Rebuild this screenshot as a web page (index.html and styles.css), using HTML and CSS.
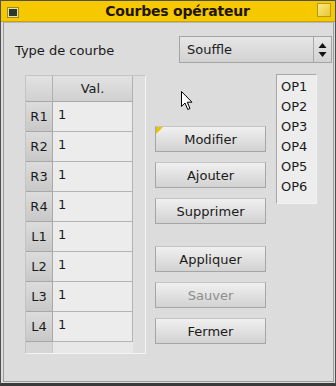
FILE: index.html
```html
<!DOCTYPE html>
<html>
<head>
<meta charset="utf-8">
<link rel="stylesheet" href="styles.css">
</head>
<body>
<div class="window">
  <div class="titlebar">
    <span class="win-icon"></span>
    <span class="title">Courbes opérateur</span>
    <span class="close-box"></span>
  </div>
  <div class="frame">
    <div class="type-row">
      <span class="label">Type de courbe</span>
      <div class="combo">
        <span class="combo-text">Souffle</span>
        <span class="combo-arrows">
          <svg width="9" height="16" viewBox="0 0 9 16"><path d="M4.5 1 L8.5 6 L0.5 6 Z" fill="#111"/><path d="M0.5 10 L8.5 10 L4.5 15 Z" fill="#111"/></svg>
        </span>
      </div>
    </div>
    <div class="main">
      <div class="table">
        <div class="grid">
          <div class="corner"></div><div class="colhead">Val.</div>
          <div class="rowhead">R1</div><div class="cell">1</div>
          <div class="rowhead">R2</div><div class="cell">1</div>
          <div class="rowhead">R3</div><div class="cell">1</div>
          <div class="rowhead">R4</div><div class="cell">1</div>
          <div class="rowhead">L1</div><div class="cell">1</div>
          <div class="rowhead">L2</div><div class="cell">1</div>
          <div class="rowhead">L3</div><div class="cell">1</div>
          <div class="rowhead">L4</div><div class="cell">1</div>
        </div>
        <div class="table-rest">
          <div class="rest-head"></div><div class="rest-body"></div>
        </div>
      </div>
      <div class="buttons">
        <button class="btn default">Modifier</button>
        <button class="btn">Ajouter</button>
        <button class="btn">Supprimer</button>
        <button class="btn sep">Appliquer</button>
        <button class="btn disabled">Sauver</button>
        <button class="btn">Fermer</button>
      </div>
      <ul class="oplist">
        <li>OP1</li><li>OP2</li><li>OP3</li><li>OP4</li><li>OP5</li><li>OP6</li>
      </ul>
    </div>
  </div>
  <svg class="cursor" width="13" height="20" viewBox="0 0 13 20"><path d="M0.5 0.5 L0.5 15.5 L4 12 L6.8 18.5 L9 17.5 L6.3 11.2 L11 11.2 Z" fill="#fff" stroke="#000" stroke-width="1" stroke-linejoin="miter"/></svg>
</div>
</body>
</html>
```
FILE: styles.css
```css
html, body {
  margin: 0;
  padding: 0;
  background: #dcdcdc;
}
body {
  font-family: "DejaVu Sans", "Liberation Sans", sans-serif;
  font-size: 13px;
  color: #1a1a1a;
}
.window {
  position: relative;
  width: 336px;
  height: 386px;
  box-sizing: border-box;
  border: 1px solid #505050;
  border-bottom: 3px solid #3a3a3a;
  background: #dcdcdc;
  display: flex;
  flex-direction: column;
}
.titlebar {
  height: 20px;
  background: #f5c800;
  display: flex;
  align-items: center;
  padding: 0 3px 0 6px;
  border-bottom: 1px solid #c9a400;
}
.win-icon {
  width: 8px;
  height: 7px;
  margin-left: 1px;
  margin-top: 2px;
  background: #2c3a2c;
  border: 1px solid #e8e0b0;
  box-shadow: 0 0 0 1px #a08a20;
}
.title {
  flex: 1;
  text-align: center;
  font-weight: bold;
  font-size: 14px;
  color: #1e1400;
  padding-left: 20px;
  letter-spacing: -0.2px;
}
.close-box {
  width: 12px;
  height: 12px;
  background: linear-gradient(135deg, #fbe98a, #e8c830);
  border: 1px solid #b89a10;
  margin-top: -2px;
  margin-right: 1px;
}
.frame {
  flex: 1;
  margin: 0 1px 1px 2px;
  border: 1px solid #9c9c9c;
  border-top-color: #b8b8b8;
  display: flex;
  flex-direction: column;
}
.type-row {
  margin-top: 13px;
  height: 27px;
  display: flex;
  align-items: center;
  padding-left: 11px;
}
.label {
  flex: 1;
  padding-top: 1px;
}
.combo {
  width: 151px;
  height: 25px;
  margin-right: 1px;
  border: 1px solid #a4a4a4;
  background: linear-gradient(#e6e6e6, #d2d2d2);
  display: flex;
  align-items: center;
}
.combo-text {
  flex: 1;
  padding-left: 7px;
}
.combo-arrows {
  width: 17px;
  height: 100%;
  border-left: 1px solid #a8a8a8;
  display: flex;
  align-items: center;
  justify-content: center;
}
.main {
  margin-top: 12px;
  display: flex;
  align-items: flex-start;
  padding-left: 21px;
}
.table {
  width: 119px;
  height: 277px;
  border: 1px solid #c4c4c4;
  border-right-color: #f4f4f4;
  border-bottom-color: #f4f4f4;
  background: #dedede;
  display: flex;
  flex-direction: column;
}
.grid {
  display: grid;
  grid-template-columns: 27px 80px;
  grid-template-rows: 26px repeat(8, 30px);
}
.corner, .colhead {
  background: linear-gradient(#e2e2e2, #d0d0d0);
  border-right: 1px solid #b0b0b0;
  border-bottom: 1px solid #a8a8a8;
  box-sizing: border-box;
}
.colhead {
  display: flex;
  align-items: center;
  justify-content: center;
}
.rowhead {
  background: linear-gradient(#dcdcdc, #c8c8c8);
  border-right: 1px solid #a8a8a8;
  border-bottom: 1px solid #a8a8a8;
  box-sizing: border-box;
  display: flex;
  align-items: center;
  justify-content: center;
}
.cell {
  background: #ececec;
  border-right: 1px solid #b4b4b4;
  border-bottom: 1px solid #b4b4b4;
  box-sizing: border-box;
  padding-left: 5px;
  padding-top: 5px;
}
.table-rest {
  flex: 1;
  display: flex;
}
.rest-head {
  width: 26px;
  background: #d6d6d6;
  border-right: 1px solid #c8c8c8;
}
.rest-body {
  width: 80px;
  background: #e8e8e8;
}
.buttons {
  margin-left: 9px;
  padding-top: 51px;
  display: flex;
  flex-direction: column;
  gap: 10px;
  width: 111px;
}
.btn {
  position: relative;
  height: 26px;
  font-family: inherit;
  font-size: 13px;
  color: #1a1a1a;
  border: 1px solid #a6a6a6;
  border-top-color: #c4c4c4;
  background: linear-gradient(#f0f0f0, #d2d2d2);
  padding: 0;
  margin: 0;
}
.btn.sep {
  margin-top: 12px;
}
.btn.disabled {
  color: #8e8e8e;
}
.btn.default::before {
  content: "";
  position: absolute;
  left: 0;
  top: 0;
  width: 0;
  height: 0;
  border-top: 7px solid #e8c400;
  border-right: 7px solid transparent;
}
.oplist {
  list-style: none;
  margin: -1px 0 0 10px;
  padding: 2px 0 8px 4px;
  width: 35px;
  height: 118px;
  border: 1px solid #a8a8a8;
  border-right-color: #f2f2f2;
  border-bottom-color: #f2f2f2;
  background: #ededed;
}
.oplist li {
  height: 20px;
  line-height: 20px;
}
.cursor {
  position: absolute;
  left: 180px;
  top: 90px;
}
```
